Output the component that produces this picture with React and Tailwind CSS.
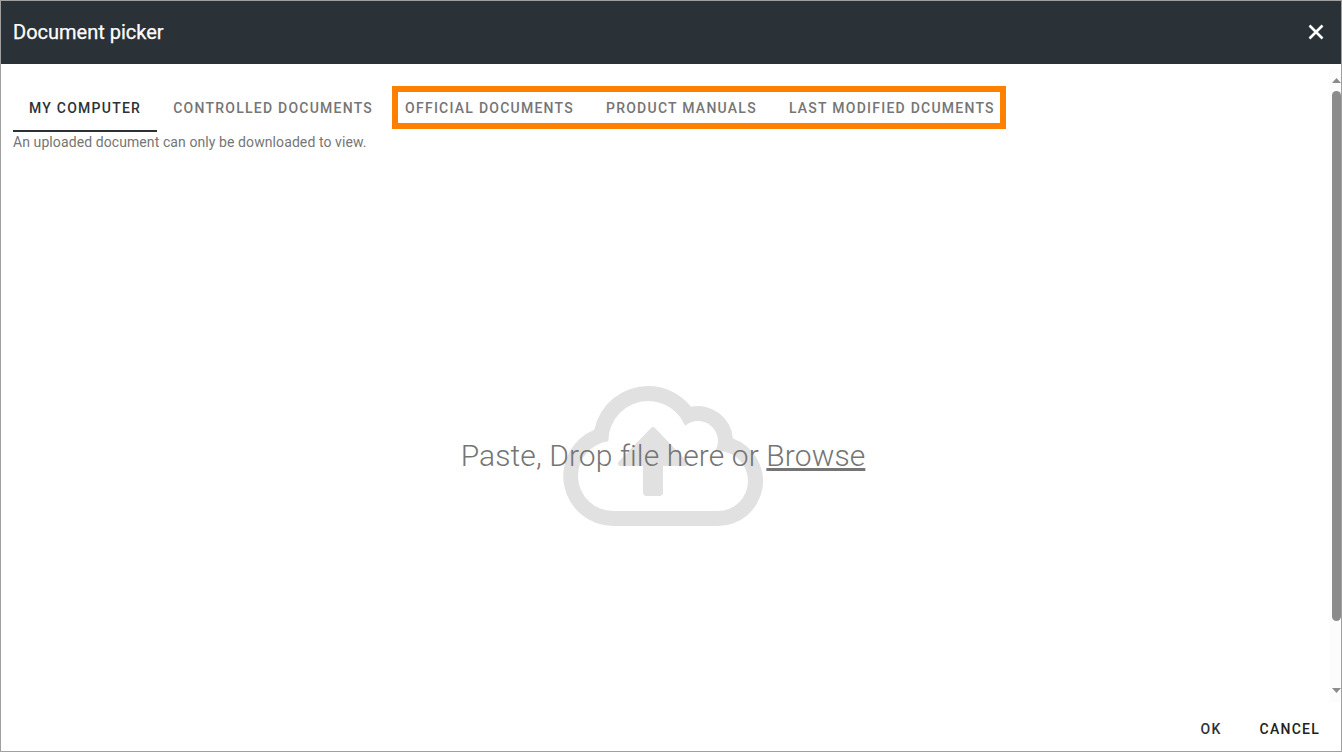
import React from "react";

const tabs = ["CONTROLLED DOCUMENTS", "OFFICIAL DOCUMENTS", "PRODUCT MANUALS", "LAST MODIFIED DCUMENTS"];

function CloudUpload() {
  return (
    <svg viewBox="0 0 640 512" className="h-[160px] w-[200px] shrink-0" fill="#e1e1e1">
      <path
        fillRule="evenodd"
        d="M272 32A176 176 0 0 0 100 172A160 160 0 0 0 160 480H496A144 144 0 0 0 543.7 200.1A112 112 0 0 0 409.6 98.3A176 176 0 0 0 272 32ZM272 80A128 128 0 0 1 390.4 159.4A64 64 0 0 1 487.2 240.4A97 97 0 0 1 496 240A96 96 0 0 1 496 432H160A112 112 0 0 1 145 209A128 128 0 0 1 272 80Z"
      />
      <path d="M256 288H183.6c-7.1 0-10.7-8.6-5.7-13.7L282.3 165.900c3.100-3.100 8.200-3.100 11.300 0L398.100 274.300c5 5.100 1.400 13.700-5.700 13.700H320v84a12 12 0 0 1-12 12h-40a12 12 0 0 1-12-12Z" />
    </svg>
  );
}

export default function App() {
  return (
    <div className="flex h-[752px] w-[1342px] flex-col overflow-hidden border border-[#a0a0a0] bg-white font-['Roboto',sans-serif] text-[#757575]">
      <header className="flex h-[63px] shrink-0 items-center justify-between bg-[#2a3237] pr-[17px] pb-0.5 pl-3 text-white">
        <h1 className="text-[20px] leading-8 [-webkit-text-stroke:0.25px_white]">Document picker</h1>
        <button aria-label="Close">
          <svg viewBox="0 0 16 16" className="h-4 w-4" stroke="white" strokeWidth="2.6" fill="none">
            <path d="M1.500 1.500L14.500 14.500M14.500 1.500L1.500 14.500" />
          </svg>
        </button>
      </header>

      <div className="flex h-[638px] shrink-0">
        <main className="flex min-w-0 flex-1 flex-col pt-5 pl-3">
          <nav className="relative flex h-12 w-fit text-sm font-medium tracking-[1.245px] whitespace-nowrap">
            <button className="border-b-2 border-[#2a3237] px-4 pt-0.5 text-[#2a3237]">MY COMPUTER</button>
            {tabs.map((t) => (
              <button key={t} className="px-4">{t}</button>
            ))}
            <span className="pointer-events-none absolute top-[2px] left-[379px] h-[43px] w-[614px] border-6 border-[#ff8000]" />
          </nav>
          <p className="text-sm leading-5 tracking-[0.09px]">An uploaded document can only be downloaded to view.</p>
          <div className="grid flex-1 place-items-center pt-[58px] pr-4">
            <div className="col-start-1 row-start-1"><CloudUpload /></div>
            <p className="z-10 col-start-1 row-start-1 text-[30px] leading-10 font-light tracking-[0.1px] whitespace-nowrap">
              Paste, Drop file here or <span className="underline decoration-[3px] underline-offset-[2px] [text-decoration-skip-ink:none]">Browse</span>
            </p>
          </div>
        </main>
        <div className="mt-[5px] flex w-[12px] shrink-0 flex-col items-end bg-[#fcfcfc]">
          <svg viewBox="0 0 9 5" className="mt-[9px] h-[5px] w-[9px] shrink-0" fill="#8b8b8b"><path d="M0 5L4.500 0L9 5Z" /></svg>
          <div className="mt-[8px] h-[530px] w-[9px] shrink-0 rounded-full bg-[#8b8b8b]" />
          <svg viewBox="0 0 9 5" className="mt-auto mb-[9px] h-[5px] w-[9px] shrink-0" fill="#8b8b8b"><path d="M0 0L4.500 5L9 0Z" /></svg>
        </div>
      </div>

      <footer className="flex flex-1 items-center justify-end gap-[38px] pt-1 pr-[21px] text-sm font-medium tracking-[1.25px]">
        <button className="text-[#2a3237]">OK</button>
        <button className="text-[#212121]">CANCEL</button>
      </footer>
    </div>
  );
}
